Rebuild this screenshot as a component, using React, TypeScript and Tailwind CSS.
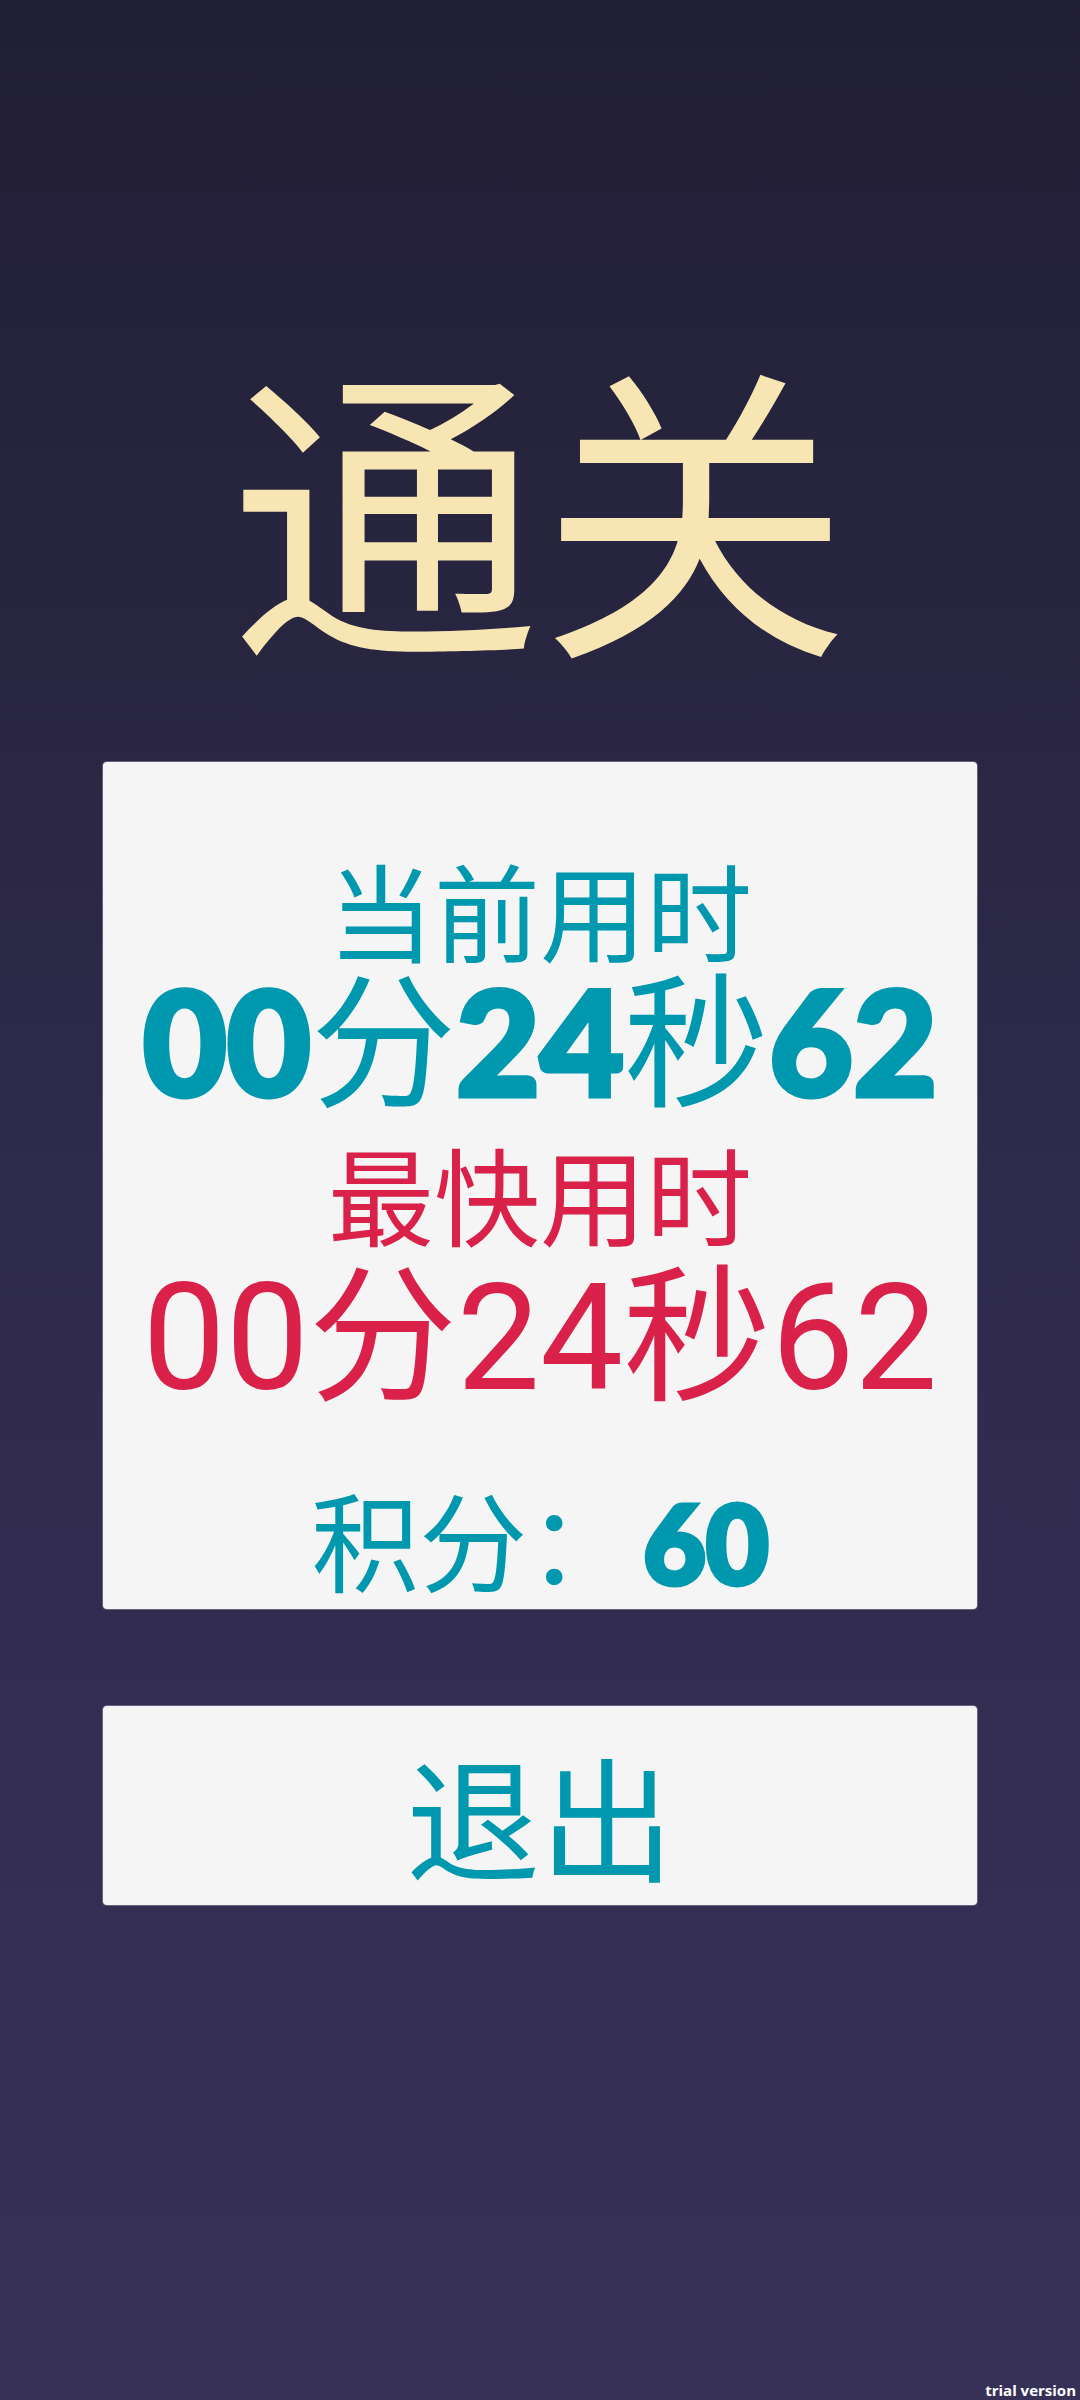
import React from "react";

function Heavy({ children }: { children: React.ReactNode }) {
  return (
    <span className="font-['Lato',sans-serif] font-black [-webkit-text-stroke:5px_#0098ae]">
      {children}
    </span>
  );
}

function Cjk({ children }: { children: React.ReactNode }) {
  return <span className="font-['Noto_Sans_CJK_SC',sans-serif]">{children}</span>;
}

export default function App() {
  return (
    <div className="relative w-full h-[2400px] flex flex-col items-center bg-gradient-to-b from-[#211f35] via-[#2f2b4c] to-[#373158] font-['Roboto','Noto_Sans_CJK_SC',sans-serif]">
      <div className="mt-[344px] text-[310px] leading-none text-[#f7e6b3] whitespace-nowrap font-['Noto_Sans_CJK_SC',sans-serif]">
        通关
      </div>

      <div className="mt-[108px] w-[874px] h-[847px] bg-[#f5f5f5] rounded-[4px] flex flex-col items-center pt-[93px] shadow-[0_0_0_1px_rgba(200,200,220,0.35)]">
        <div className="text-[106px] leading-none text-[#0098ae] whitespace-nowrap font-['Noto_Sans_CJK_SC',sans-serif]">
          当前用时
        </div>
        <div className="text-[145px] leading-none text-[#0098ae] whitespace-nowrap flex items-baseline">
          <Heavy>00</Heavy>
          <Cjk>分</Cjk>
          <Heavy>24</Heavy>
          <Cjk>秒</Cjk>
          <Heavy>62</Heavy>
        </div>
        <div className="mt-[26px] text-[106px] leading-none text-[#d9214a] whitespace-nowrap font-['Noto_Sans_CJK_SC',sans-serif]">
          最快用时
        </div>
        <div className="mt-[20px] text-[148px] leading-none text-[#d9214a] whitespace-nowrap">
          00分24秒62
        </div>
        <div className="mt-[70px] text-[108px] leading-none text-[#0098ae] whitespace-nowrap flex items-baseline">
          <Cjk>积分：</Cjk>
          <span className="ml-[8px]">
            <Heavy>60</Heavy>
          </span>
        </div>
      </div>

      <div className="mt-[97px] w-[874px] h-[199px] bg-[#f5f5f5] rounded-[4px] flex items-center justify-center pt-[16px] shadow-[0_0_0_1px_rgba(200,200,220,0.35)]">
        <div className="text-[134px] leading-none text-[#0098ae] whitespace-nowrap font-['Noto_Sans_CJK_SC',sans-serif]">
          退出
        </div>
      </div>

      <div className="absolute right-[4px] bottom-[2px] text-[15px] font-bold text-white leading-none font-['Open_Sans',sans-serif]">
        trial version
      </div>
    </div>
  );
}
